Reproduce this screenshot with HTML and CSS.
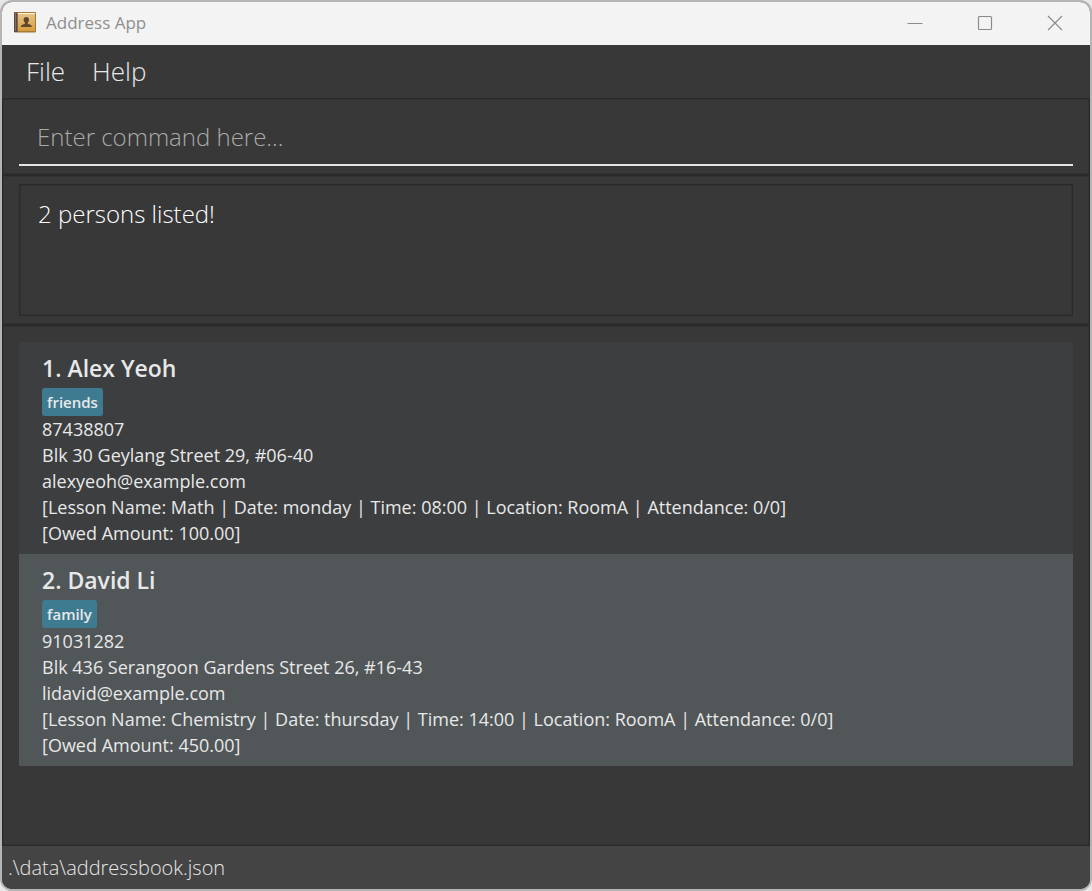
FILE: index.html
```html
<!DOCTYPE html>
<html lang="en">
<head>
<meta charset="utf-8">
<title>Address App</title>
<link rel="stylesheet" href="styles.css">
</head>
<body>
<div class="window">
  <header class="titlebar">
    <svg class="app-icon" viewBox="0 0 22 21" aria-hidden="true">
      <defs>
        <linearGradient id="cover" x1="0" y1="0" x2="0" y2="1">
          <stop offset="0" stop-color="#e6c78d"/>
          <stop offset="1" stop-color="#d79c3c"/>
        </linearGradient>
      </defs>
      <rect x="0" y="0" width="22" height="20.5" rx="1" fill="#a5793a"/>
      <rect x="3.5" y="1" width="17.5" height="18" fill="url(#cover)"/>
      <rect x="3" y="1" width="18" height="1" fill="#fff3dc"/>
      <rect x="0" y="0.5" width="3.6" height="19.5" fill="#5e4840"/>
      <rect x="1" y="1" width="1" height="18" fill="#80706a"/>
      <path d="M12.3 5c1.800 0 2.800 1.200 2.700 2.900-.1 1.200-.6 2-1.200 2.600v1.300c1.500.6 4 .8 4 3.200H7c0-2.400 2.400-2.600 3.900-3.200v-1.300c-.7-.6-1.200-1.400-1.300-2.600C9.500 6.200 10.500 5 12.300 5z" fill="#5e4930"/>
    </svg>
    <h1 class="title">Address App</h1>
    <div class="window-buttons">
      <button class="window-button" type="button" aria-label="Minimize">
        <svg viewBox="0 0 16 16" aria-hidden="true"><path d="M0.500 8.500h15"/></svg>
      </button>
      <button class="window-button" type="button" aria-label="Maximize">
        <svg viewBox="0 0 16 16" aria-hidden="true"><rect x="1.500" y="1.500" width="13" height="13" rx="1"/></svg>
      </button>
      <button class="window-button" type="button" aria-label="Close">
        <svg viewBox="0 0 16 16" aria-hidden="true"><path d="M1 1l14 14M15 1L1 15"/></svg>
      </button>
    </div>
  </header>
  <nav class="menubar">
    <button class="menu" type="button">File</button>
    <button class="menu" type="button">Help</button>
  </nav>
  <form class="pane command-pane">
    <input class="command" type="text" aria-label="Command" placeholder="Enter command here...">
  </form>
  <section class="pane result-pane">
    <textarea class="result" aria-label="Result" readonly>2 persons listed!</textarea>
  </section>
  <main class="pane list-pane">
    <ol class="persons">
      <li class="person">
        <h2 class="name">1. Alex Yeoh</h2>
        <div class="tags"><span class="tag">friends</span></div>
        <p class="detail">87438807</p>
        <p class="detail">Blk 30 Geylang Street 29, #06-40</p>
        <p class="detail">alexyeoh@example.com</p>
        <p class="detail">[Lesson Name: Math | Date: monday | Time: 08:00 | Location: RoomA | Attendance: 0/0]</p>
        <p class="detail">[Owed Amount: 100.00]</p>
      </li>
      <li class="person">
        <h2 class="name">2. David Li</h2>
        <div class="tags"><span class="tag">family</span></div>
        <p class="detail">91031282</p>
        <p class="detail">Blk 436 Serangoon Gardens Street 26, #16-43</p>
        <p class="detail">lidavid@example.com</p>
        <p class="detail">[Lesson Name: Chemistry | Date: thursday | Time: 14:00 | Location: RoomA | Attendance: 0/0]</p>
        <p class="detail">[Owed Amount: 450.00]</p>
      </li>
    </ol>
  </main>
  <footer class="statusbar">.\data\addressbook.json</footer>
</div>
</body>
</html>
```
FILE: styles.css
```css
* {
  box-sizing: border-box;
}

body {
  margin: 0;
  background: #e8e8e8;
  color: #e8e8e8;
  font-family: "Open Sans", "Noto Sans", sans-serif;
}

button,
input,
textarea {
  margin: 0;
  padding: 0;
  border: 0;
  background: none;
  color: inherit;
  font: inherit;
}

.window {
  display: flex;
  flex-direction: column;
  min-height: 100vh;
  overflow: hidden;
  border: 2px solid #b5b5b5;
  border-radius: 12px;
  background: #383838;
}

.titlebar {
  display: flex;
  align-items: center;
  height: 43px;
  padding: 0 0 2px 12px;
  background: #f3f3f3;
}

.app-icon {
  width: 22px;
  height: 21px;
}

.title {
  flex: 1;
  margin: 0 0 0 10px;
  color: #8e8e8e;
  font-size: 17px;
  font-weight: 400;
}

.window-buttons {
  display: flex;
}

.window-button {
  display: flex;
  align-items: center;
  justify-content: center;
  width: 70px;
  height: 41px;
}

.window-button svg {
  width: 16px;
  height: 16px;
  fill: none;
  stroke: #8b8b8b;
  stroke-width: 1.2;
}

.menubar {
  display: flex;
  gap: 27px;
  height: 53px;
  padding: 0 24px 2px;
}

.menu {
  font-size: 26px;
  font-weight: 300;
}

.pane {
  border: 1px solid #2a2a2a;
  box-shadow: inset 0 0 0 1px #323232;
  padding: 0 16px;
}

.command-pane {
  padding-top: 11px;
  padding-bottom: 8px;
}

.command {
  display: block;
  width: 100%;
  height: 56px;
  padding: 0 18px 2px;
  border-bottom: 2px solid #e4e4e4;
  font-size: 24px;
  font-weight: 300;
}

.command::placeholder {
  color: #aaaaaa;
  opacity: 1;
}

.result-pane {
  padding-top: 8px;
  padding-bottom: 8px;
}

.result {
  display: block;
  width: 100%;
  height: 132px;
  padding: 12px 18px;
  border: 1px solid #2a2a2a;
  box-shadow: inset 0 0 0 1px #323232;
  color: #ffffff;
  font-size: 24px;
  font-weight: 300;
  line-height: 34px;
  resize: none;
}

.list-pane {
  flex: 1;
  padding-top: 16px;
}

.persons {
  margin: 0;
  padding: 0;
  list-style: none;
}

.person {
  padding: 10px 23px 8px;
  background: #3c3e3f;
}

.person:nth-child(even) {
  background: #515658;
}

.name {
  margin: 0 0 4px;
  font-size: 23px;
  font-weight: 600;
  line-height: 32px;
}

.tags {
  display: flex;
  gap: 7px;
}

.tag {
  padding: 0 5px;
  border-radius: 3px;
  background: #3e7b91;
  font-size: 15px;
  font-weight: 600;
  line-height: 28px;
}

.detail {
  margin: 0;
  font-size: 18px;
  line-height: 26px;
}

.statusbar {
  padding: 0 6px;
  background: #444444;
  font-size: 20px;
  font-weight: 300;
  line-height: 43px;
}
```
